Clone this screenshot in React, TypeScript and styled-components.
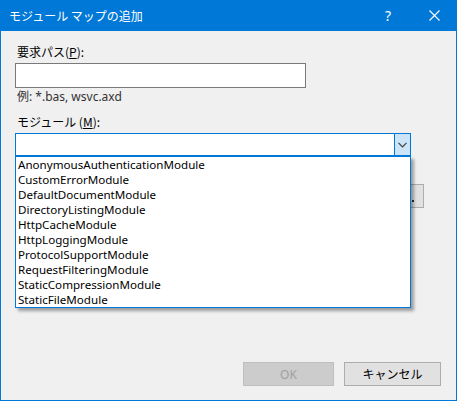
import styled, { createGlobalStyle } from "styled-components";

const modules = [
  "AnonymousAuthenticationModule",
  "CustomErrorModule",
  "DefaultDocumentModule",
  "DirectoryListingModule",
  "HttpCacheModule",
  "HttpLoggingModule",
  "ProtocolSupportModule",
  "RequestFilteringModule",
  "StaticCompressionModule",
  "StaticFileModule",
];

const GlobalStyle = createGlobalStyle`
  html, body {
    margin: 0;
    padding: 0;
    background: #f0f0f0;
  }
  body {
    font-family: "Segoe UI", "Noto Sans", "Noto Sans CJK JP", sans-serif;
    font-size: 12px;
  }
  * {
    box-sizing: border-box;
  }
`;

const Window = styled.div`
  width: 457px;
  height: 401px;
  display: flex;
  flex-direction: column;
  background: #f0f0f0;
  border: 1px solid #0078d7;
  border-top: none;
`;

const TitleBar = styled.div`
  height: 31px;
  margin: 0 -1px;
  display: flex;
  align-items: center;
  background: #0078d7;
  color: #fff;
  padding-left: 9px;
`;

const Title = styled.div`
  flex: 1;
  font-size: 12px;
  font-family: "Noto Sans CJK JP", sans-serif;
`;

const TitleButton = styled.div`
  width: 46px;
  height: 31px;
  display: flex;
  align-items: center;
  justify-content: center;
  font-size: 14px;
`;

const Body = styled.div`
  flex: 1;
  display: flex;
  flex-direction: column;
  padding: 13px 15px 14px 14px;
`;

const Label = styled.div<{ $top?: number }>`
  line-height: 16px;
  color: #000;
  margin-top: ${(p) => p.$top ?? 0}px;
  margin-left: 2px;
  font-family: "Noto Sans CJK JP", sans-serif;
  u {
    text-decoration: underline;
  }
`;

/* hidden behind the open drop-down list */
const Spacer = styled.div<{ $top?: number }>`
  height: 16px;
  margin-top: ${(p) => p.$top ?? 0}px;
`;

const Hint = styled.div`
  line-height: 16px;
  margin-top: 1px;
  margin-left: 2px;
  color: #333;
  font-family: "Noto Sans", "Noto Sans CJK JP", sans-serif;
`;

const TextBox = styled.div<{ $width: number; $height?: number; $top?: number }>`
  width: ${(p) => p.$width}px;
  height: ${(p) => p.$height ?? 25}px;
  margin-top: ${(p) => p.$top ?? 3}px;
  background: #fff;
  border: 1px solid #7a7a7a;
`;

const Row = styled.div`
  display: flex;
  gap: 7px;
  margin-top: 3px;
`;

const Combo = styled.div`
  position: relative;
  width: 396px;
  height: 23px;
  margin-top: 3px;
  background: #fff;
  border: 1px solid #0078d7;
  display: flex;
  justify-content: flex-end;
  z-index: 2;
`;

const DropButton = styled.div`
  width: 17px;
  margin: -1px -1px -1px 0;
  background: #cce4f7;
  border: 1px solid #0078d7;
  display: flex;
  align-items: center;
  justify-content: center;
`;

const List = styled.div`
  position: absolute;
  left: -1px;
  top: 22px;
  width: 396px;
  background: #fff;
  border: 1px solid #0078d7;
  box-shadow: 3px 3px 3px rgba(0, 0, 0, 0.35);
`;

const Item = styled.div`
  height: 15px;
  line-height: 15px;
  padding-left: 2px;
  color: #000;
  font-family: "Noto Sans", sans-serif;
  font-size: 11.6px;
  white-space: nowrap;
`;

const Button = styled.div<{ $width: number; $disabled?: boolean }>`
  width: ${(p) => p.$width}px;
  height: 24px;
  display: flex;
  align-items: center;
  justify-content: center;
  background: ${(p) => (p.$disabled ? "#cccccc" : "#e1e1e1")};
  border: 1px solid ${(p) => (p.$disabled ? "#bfbfbf" : "#adadad")};
  color: ${(p) => (p.$disabled ? "#a0a0a0" : "#000")};
  font-family: "Noto Sans", "Noto Sans CJK JP", sans-serif;
  font-size: 12px;
`;

const BrowseButton = styled(Button)`
  position: relative;
  &::after {
    content: "";
    position: absolute;
    left: 14px;
    top: 15px;
    width: 2px;
    height: 2px;
    background: #333;
  }
`;

const LeftButton = styled(Button)`
  margin-top: 27px;
  margin-left: 1px;
`;

const Footer = styled.div`
  margin-top: auto;
  display: flex;
  justify-content: flex-end;
  gap: 10px;
`;

export default function App() {
  return (
    <>
      <GlobalStyle />
      <Window>
        <TitleBar>
          <Title>モジュール マップの追加</Title>
          <TitleButton>?</TitleButton>
          <TitleButton>
            <svg width="11" height="11" viewBox="0 0 11 11">
              <path d="M0.5 0.5 L10.5 10.5 M10.5 0.5 L0.5 10.5" stroke="#fff" strokeWidth="1.1" />
            </svg>
          </TitleButton>
        </TitleBar>
        <Body>
          <Label>
            要求パス(<u>P</u>):
          </Label>
          <TextBox $width={291} />
          <Hint>例: *.bas, wsvc.axd</Hint>
          <Label $top={9}>
            モジュール (<u>M</u>):
          </Label>
          <Combo>
            <DropButton>
              <svg width="9" height="6" viewBox="0 0 9 6">
                <path d="M0.5 0.8 L4.5 4.8 L8.5 0.8" stroke="#404040" strokeWidth="1.2" fill="none" />
              </svg>
            </DropButton>
            <List>
              {modules.map((m) => (
                <Item key={m}>{m}</Item>
              ))}
            </List>
          </Combo>
          <Spacer $top={9} />
          <Row>
            <TextBox $width={375} $height={24} $top={0} />
            <BrowseButton $width={27} />
          </Row>
          <Spacer $top={6} />
          <TextBox $width={291} $height={24} />
          <LeftButton $width={109} />
          <Footer>
            <Button $width={91} $disabled>
              OK
            </Button>
            <Button $width={97}>キャンセル</Button>
          </Footer>
        </Body>
      </Window>
    </>
  );
}
